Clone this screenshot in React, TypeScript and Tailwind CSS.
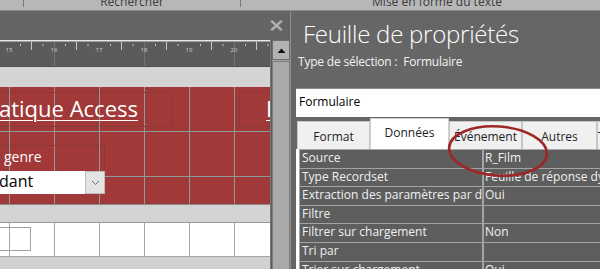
import React from "react";

const rows: [string, string][] = [
  ["Source", "R_Film"],
  ["Type Recordset", "Feuille de réponse dynamique"],
  ["Extraction des paramètres par défaut", "Oui"],
  ["Filtre", ""],
  ["Filtrer sur chargement", "Non"],
  ["Tri par", ""],
  ["Trier sur chargement", "Oui"],
];

const tabs = [
  { label: "Format", w: "w-[73px]", active: false },
  { label: "Données", w: "w-[79px]", active: true },
  { label: "Événement", w: "w-[73px]", active: false },
  { label: "Autres", w: "w-[75px]", active: false },
  { label: "Toutes", w: "w-[40px]", active: false },
];

function Ruler() {
  const marks = [15, 16, 17, 18, 19, 20];
  return (
    <svg width="270" height="26" className="block shrink-0">
      <rect width="270" height="26" fill="#5b5b5b" />
      <rect width="270" height="1.5" fill="#e6e6e6" />
      {marks.map((n, i) => {
        const x = 9 + 45 * i;
        return (
          <g key={n}>
            {n % 2 === 0 && (
              <line x1={x + 0.5} y1="2" x2={x + 0.5} y2="26" stroke="#737373" />
            )}
            <text
              x={x}
              y="12"
              fontSize="6"
              fill="#cfcfcf"
              textAnchor="middle"
              fontFamily="Open Sans, sans-serif"
            >
              {n}
            </text>
            <rect x={x + 11} y="4" width="1" height="2" fill="#c8c8c8" />
            <rect x={x + 22} y="2" width="1" height="8" fill="#c8c8c8" />
            <rect x={x + 33.5} y="4" width="1" height="2" fill="#c8c8c8" />
          </g>
        );
      })}
    </svg>
  );
}

function LeftPanel() {
  return (
    <div className="flex w-[290px] shrink-0 flex-col">
      <div className="flex h-[29px] shrink-0 justify-end bg-[#646464] pr-[7px] pt-[9px]">
        <svg width="13" height="11" viewBox="0 0 13 11">
          <path d="M2 1.5 L11 9.5 M11 1.5 L2 9.5" stroke="#7c7c7c" strokeWidth="3.6" strokeLinecap="round" />
          <path d="M2 1.5 L11 9.5 M11 1.5 L2 9.5" stroke="#b6b6b6" strokeWidth="1.8" strokeLinecap="round" />
        </svg>
      </div>
      <div className="flex flex-1">
        <div className="flex w-[271px] flex-col border-r border-[#7a7a7a]">
          <Ruler />
          <div className="h-[21px] shrink-0 border-t border-[#4e4e4e] bg-[#d4d4d4]" />
          <div className="h-[117px] shrink-0 bg-[#a23939] bg-[linear-gradient(90deg,#8e9b9b_1px,transparent_1px),linear-gradient(#8e9b9b_1px,transparent_1px)] bg-size-[45px_45px] bg-position-[9px_-1px] pt-[5px] font-['Open_Sans',sans-serif] text-white">
            <div className="flex">
              <div className="h-[35px] w-[173px] border border-l-0 border-dotted border-[#7c3434] pt-[1px] text-[22px] leading-[28px]">
                <span className="-ml-[1px] underline decoration-1 underline-offset-[3px]">atique Access</span>
              </div>
              <div className="ml-[66px] h-[35px] flex-1 overflow-hidden border border-r-0 border-dotted border-[#7c3434] pl-[26px] pt-[1px] text-[22px] leading-[28px]">
                <span className="underline decoration-1 underline-offset-[3px]">L</span>
              </div>
            </div>
            <div className="mt-[18px] h-[26px] w-[105px] border border-b-0 border-l-0 border-dotted border-[#7c3434] pl-[4px] pt-[1px] text-[14px] leading-[20px]">
              genre
            </div>
            <div className="flex h-[23px] w-[105px] bg-white">
              <div className="flex-1 overflow-hidden whitespace-nowrap pl-0 text-[16px] leading-[21px] text-black">
                <span className="-ml-[1px]">dant</span>
              </div>
              <div className="flex w-[20px] items-center justify-center border border-[#bdbdbd] bg-[#e3e3e3]">
                <svg width="9" height="6" viewBox="0 0 9 6">
                  <path d="M1 1 L4.5 4.5 L8 1" fill="none" stroke="#6a6a6a" strokeWidth="1" />
                </svg>
              </div>
            </div>
          </div>
          <div className="h-[18px] shrink-0 border-t border-[#8c8c8c] bg-[#d4d4d4]" />
          <div className="h-[34px] shrink-0 border-t border-[#9a9a9a] bg-white bg-[linear-gradient(90deg,#a6a6a6_1px,transparent_1px)] bg-size-[45px_100%] bg-position-[9px_0] pt-[4px]">
            <div className="h-[24px] w-[31px] border border-l-0 border-[#a0a0a0]" />
          </div>
          <div className="flex-1 border-t border-[#a6a6a6] bg-[#d2d2d2]" />
        </div>
        <div className="flex w-[19px] flex-col border-l border-[#5c5c5c] bg-[#a4a4a4]">
          <div className="flex h-[20px] shrink-0 items-center justify-center border border-[#6e6e6e] bg-[#b2b2b2]">
            <svg width="9" height="5" viewBox="0 0 9 5">
              <path d="M0.5 5 L4.5 0.5 L8.5 5 Z" fill="#111" />
            </svg>
          </div>
          <div className="mt-[1px] flex-1 border border-b-0 border-[#7d7d7d] bg-[#a9a9a9]" />
        </div>
      </div>
    </div>
  );
}

function RightPanel() {
  return (
    <div className="flex w-[309px] shrink-0 flex-col overflow-hidden bg-[#666666] pt-[9px] font-['Open_Sans',sans-serif]">
      <div className="h-[28px] shrink-0 whitespace-nowrap pl-[12px] text-[24px] font-light leading-[28px] tracking-[-0.25px] text-white">
        Feuille de propriétés
      </div>
      <div className="mt-[6px] h-[16px] shrink-0 whitespace-nowrap pl-[7px] text-[12px] leading-[16px] tracking-[-0.2px] text-[#f2f2f2]">
        Type de sélection :&nbsp; Formulaire
      </div>
      <div className="ml-[5px] mt-[18px] h-[29px] shrink-0 border-t border-[#8c8c8c] bg-white pl-[3px] text-[12px] leading-[25px] text-black">
        Formulaire
      </div>
      <div className="ml-[5px] flex shrink-0 flex-col">
        <div className="flex h-[32px] shrink-0 items-end pl-[1px]">
          {tabs.map((t) =>
            t.active ? (
              <div
                key={t.label}
                className={`${t.w} h-[31px] shrink-0 border-x border-t border-[#d0d0d0] bg-white text-center text-[12px] leading-[28px] text-[#1e1e1e]`}
              >
                {t.label}
              </div>
            ) : (
              <div
                key={t.label}
                className={`${t.w} h-[28px] shrink-0 whitespace-nowrap border-x border-t border-[#c6c6c6] bg-[#f0f0f0] pt-[2px] text-center text-[12px] leading-[26px] text-[#1e1e1e]`}
              >
                {t.label}
              </div>
            )
          )}
        </div>
        <div className="shrink-0 bg-white pl-[3px]">
          <div className="border-l border-t-[1.5px] border-[#a9a9a9] bg-[#5e5e5e]">
            {rows.map(([label, value]) => (
              <div key={label} className="flex h-[18.6px] border-b-[1.5px] border-[#a3a3a3] text-[12px] leading-[16px] text-[#f0f0f0]">
                <div className="w-[184px] shrink-0 overflow-hidden whitespace-nowrap border-r-2 border-[#a3a3a3] pl-[2px]">
                  {label}
                </div>
                <div className="overflow-hidden whitespace-nowrap pl-[1px]">{value}</div>
              </div>
            ))}
          </div>
        </div>
      </div>
    </div>
  );
}

export default function App() {
  return (
    <div className="relative h-[269px] w-[600px] overflow-hidden bg-[#666666] font-['Open_Sans',sans-serif]">
      <div className="flex h-[11px] border-b border-[#8a8a8a] bg-[#b7b7b7] text-[12px] leading-[16px] text-[#3c3c3c]">
        <div className="h-[7px] w-[24px] shrink-0 border-r border-[#7c7c7c]" />
        <div className="h-[7px] w-[217px] shrink-0 overflow-visible border-r border-[#7c7c7c] text-center">
          <div className="-mt-[6px]">Rechercher</div>
        </div>
        <div className="h-[7px] w-[392px] shrink-0 text-center">
          <div className="-mt-[6px]">Mise en forme du texte</div>
        </div>
      </div>
      <div className="flex h-[258px]">
        <LeftPanel />
        <div className="w-px shrink-0 bg-[#8e8e8e]" />
        <RightPanel />
      </div>
      <svg
        className="pointer-events-none absolute left-[446px] top-[123px]"
        width="106"
        height="56"
        viewBox="0 0 106 56"
      >
        <ellipse
          cx="52"
          cy="28"
          rx="49"
          ry="24.5"
          fill="none"
          stroke="#9f2626"
          strokeWidth="2.6"
          transform="rotate(4 52 28)"
        />
      </svg>
    </div>
  );
}
